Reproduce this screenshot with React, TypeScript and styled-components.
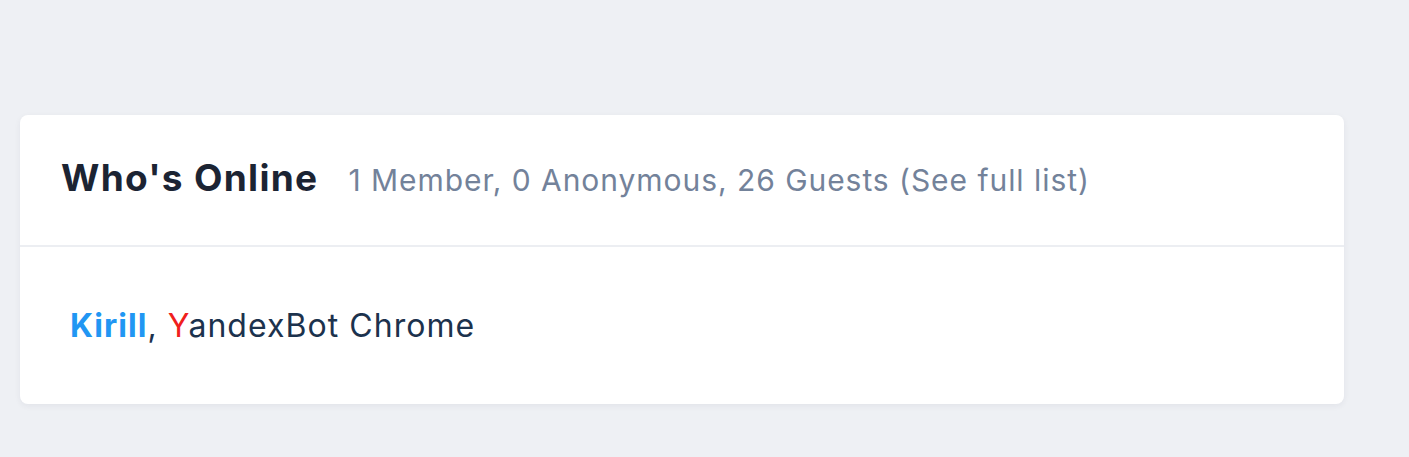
import React from 'react';
import styled, { createGlobalStyle } from 'styled-components';

const GlobalStyle = createGlobalStyle`
  body {
    margin: 0;
    background: #eef0f4;
    font-family: Inter, "Noto Sans", sans-serif;
  }
`;

const Page = styled.div`
  padding: 115px 65px 53px 20px;
`;

const Card = styled.section`
  background: #fff;
  border-radius: 8px;
  box-shadow: 0 2px 6px rgba(30, 40, 70, 0.06);
`;

const CardHeader = styled.header`
  display: flex;
  align-items: baseline;
  gap: 30px;
  height: 132px;
  padding: 0 41px;
  box-sizing: border-box;
  border-bottom: 2px solid #eceef2;
  line-height: 126px;
`;

const Title = styled.h2`
  margin: 0;
  font-size: 37px;
  font-weight: 700;
  color: #1c2433;
  letter-spacing: 1.3px;
`;

const Stats = styled.span`
  font-size: 30px;
  color: #73829a;
  letter-spacing: 0.95px;
`;

const CardBody = styled.div`
  display: flex;
  align-items: center;
  height: 157px;
  padding: 0 50px;
  font-size: 32px;
  color: #1c324d;
  letter-spacing: 1.05px;
`;

const UserLink = styled.a<{ $color?: string; $bold?: boolean }>`
  color: ${(p) => p.$color || 'inherit'};
  font-weight: ${(p) => (p.$bold ? 700 : 400)};
  text-decoration: none;
`;

const Initial = styled.span`
  color: #f0201c;
`;

const App: React.FC = () => {
  return (
    <>
      <GlobalStyle />
      <Page>
        <Card>
          <CardHeader>
            <Title>Who's Online</Title>
            <Stats>1 Member, 0 Anonymous, 26 Guests (See full list)</Stats>
          </CardHeader>
          <CardBody>
            <span>
              <UserLink $color="#2196f3" $bold>Kirill</UserLink>,{' '}
              <UserLink>
                <Initial>Y</Initial>andexBot Chrome
              </UserLink>
            </span>
          </CardBody>
        </Card>
      </Page>
    </>
  );
};

export default App;
